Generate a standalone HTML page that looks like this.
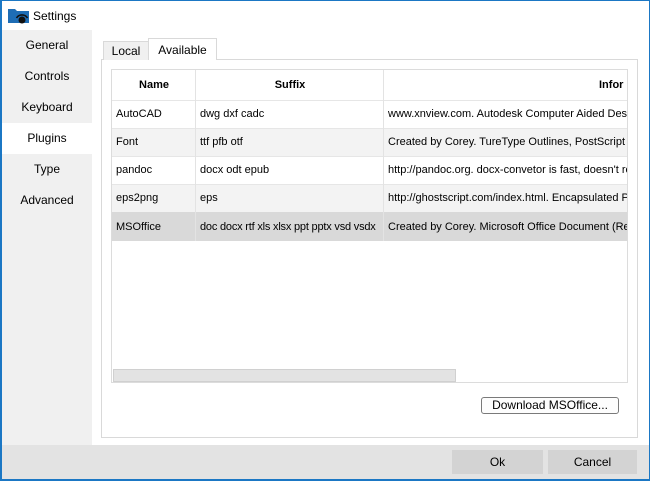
<!DOCTYPE html>
<html><head><style>
*{margin:0;padding:0;box-sizing:border-box}
body{width:650px;height:481px;position:relative;overflow:hidden;background:#fff;font-family:"Liberation Sans",sans-serif;font-size:11px;color:#000}
.abs{position:absolute}
.side{left:2px;top:30px;width:90px;height:415px;background:#f0f0f0}
.si{position:absolute;left:0;width:90px;height:31px;line-height:31px;text-align:center;font-size:12px}
.cell{position:absolute;height:28px;line-height:28px;padding-left:4px;white-space:nowrap;overflow:hidden}
.c1{width:83px}.c2{width:187px}.c3{width:245px}
</style></head><body>
<div class="abs" style="left:0;top:0;width:650px;height:481px;border:1px solid #1b77c4;border-left-width:2px;border-bottom-width:2px"></div>
<svg class="abs" style="left:8px;top:6px" width="22" height="18"><path d="M0 3 h7 l2 2 h12 v12 h-21z" fill="#1e6db5"/><circle cx="14" cy="14" r="3.5" fill="#111"/><path d="M8.5 12 a6.5 6.5 0 0 1 11 0" stroke="#111" stroke-width="1.6" fill="none"/></svg>
<div class="abs" style="left:33px;top:9px;font-size:12px">Settings</div>
<div class="abs side">
<div class="si" style="top:0">General</div>
<div class="si" style="top:31px">Controls</div>
<div class="si" style="top:62px">Keyboard</div>
<div class="si" style="top:93px;background:#fff">Plugins</div>
<div class="si" style="top:124px">Type</div>
<div class="si" style="top:155px">Advanced</div>
</div>
<div class="abs" style="left:2px;top:445px;width:647px;height:34px;background:#e3e3e3"></div>
<div class="abs" style="left:101px;top:59px;width:537px;height:379px;border:1px solid #d9d9d9"></div>
<div class="abs" style="left:103px;top:41px;width:46px;height:19px;background:#f0f0f0;border:1px solid #d9d9d9;border-bottom:none;text-align:center;line-height:18px;font-size:12px">Local</div>
<div class="abs" style="left:148px;top:38px;width:69px;height:22px;background:#fff;border:1px solid #d9d9d9;border-bottom:none;text-align:center;line-height:22px;font-size:12px">Available</div>
<div class="abs" style="left:111px;top:69px;width:517px;height:314px;border:1px solid #dcdcdc;overflow:hidden">
<div class="abs" style="left:0;top:58px;width:517px;height:28px;background:#f3f3f3"></div>
<div class="abs" style="left:0;top:114px;width:517px;height:28px;background:#f3f3f3"></div>
<div class="abs" style="left:0;top:142px;width:517px;height:29px;background:#d9d9d9"></div>
<div class="abs" style="left:0;top:30px;width:517px;height:1px;background:#e6e6e6"></div>
<div class="abs" style="left:0;top:58px;width:517px;height:1px;background:#e6e6e6"></div>
<div class="abs" style="left:0;top:86px;width:517px;height:1px;background:#e6e6e6"></div>
<div class="abs" style="left:0;top:114px;width:517px;height:1px;background:#e6e6e6"></div>
<div class="abs" style="left:83px;top:0;width:1px;height:171px;background:#e3e3e3"></div>
<div class="abs" style="left:271px;top:0;width:1px;height:171px;background:#e3e3e3"></div>
<div class="abs" style="left:0;top:0;width:84px;height:30px;line-height:30px;text-align:center;font-weight:bold">Name</div>
<div class="abs" style="left:84px;top:0;width:188px;height:30px;line-height:30px;text-align:center;font-weight:bold">Suffix</div>
<div class="abs" style="left:487px;top:0;height:30px;line-height:30px;font-weight:bold">Infor</div>
<div class="cell c1" style="left:0;top:30px">AutoCAD</div><div class="cell c2" style="left:84px;top:30px">dwg dxf cadc</div><div class="cell c3" style="left:272px;top:30px">www.xnview.com. Autodesk Computer Aided Design</div>
<div class="cell c1" style="left:0;top:58px">Font</div><div class="cell c2" style="left:84px;top:58px">ttf pfb otf</div><div class="cell c3" style="left:272px;top:58px">Created by Corey. TureType Outlines, PostScript Outlines</div>
<div class="cell c1" style="left:0;top:86px">pandoc</div><div class="cell c2" style="left:84px;top:86px">docx odt epub</div><div class="cell c3" style="left:272px;top:86px">http://pandoc.org. docx-convetor is fast, doesn't require</div>
<div class="cell c1" style="left:0;top:114px">eps2png</div><div class="cell c2" style="left:84px;top:114px">eps</div><div class="cell c3" style="left:272px;top:114px">http://ghostscript.com/index.html. Encapsulated PostScript</div>
<div class="cell c1" style="left:0;top:143px">MSOffice</div><div class="cell c2" style="left:84px;top:143px;letter-spacing:-0.2px">doc docx rtf xls xlsx ppt pptx vsd vsdx</div><div class="cell c3" style="left:272px;top:143px">Created by Corey. Microsoft Office Document (Read)</div>
<div class="abs" style="left:1px;top:299px;width:343px;height:13px;background:#e3e3e3;border:1px solid #d0d0d0"></div>
</div>
<div class="abs" style="left:481px;top:397px;width:138px;height:17px;border:1px solid #7a7a7a;border-radius:3px;background:#fdfdfd;text-align:center;line-height:15px;font-size:12px">Download MSOffice...</div>
<div class="abs" style="left:452px;top:450px;width:91px;height:24px;background:#d3d3d3;text-align:center;line-height:24px;font-size:12px">Ok</div>
<div class="abs" style="left:548px;top:450px;width:89px;height:24px;background:#d3d3d3;text-align:center;line-height:24px;font-size:12px">Cancel</div>
</body></html>
